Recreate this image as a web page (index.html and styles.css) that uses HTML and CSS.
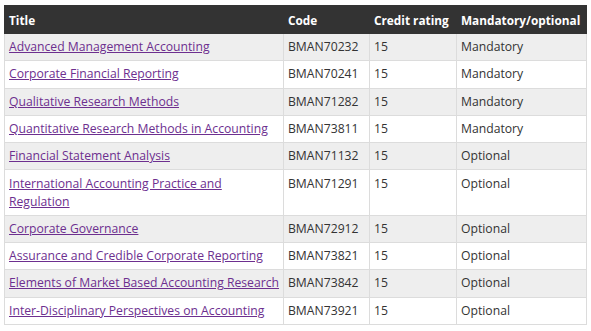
FILE: index.html
```html
<!DOCTYPE html>
<html>
<head>
<meta charset="utf-8">
<link rel="stylesheet" href="styles.css">
</head>
<body>
<div class="wrap">
<table class="units">
<colgroup>
<col class="c-title"><col class="c-code"><col class="c-credit"><col class="c-mand">
</colgroup>
<thead>
<tr><th>Title</th><th>Code</th><th>Credit rating</th><th>Mandatory/optional</th></tr>
</thead>
<tbody>
<tr><td><a href="#">Advanced Management Accounting</a></td><td>BMAN70232</td><td>15</td><td>Mandatory</td></tr>
<tr><td><a href="#">Corporate Financial Reporting</a></td><td>BMAN70241</td><td>15</td><td>Mandatory</td></tr>
<tr><td><a href="#">Qualitative Research Methods</a></td><td>BMAN71282</td><td>15</td><td>Mandatory</td></tr>
<tr><td><a href="#">Quantitative Research Methods in Accounting</a></td><td>BMAN73811</td><td>15</td><td>Mandatory</td></tr>
<tr><td><a href="#">Financial Statement Analysis</a></td><td>BMAN71132</td><td>15</td><td>Optional</td></tr>
<tr><td><a href="#">International Accounting Practice and<br>Regulation</a></td><td>BMAN71291</td><td>15</td><td>Optional</td></tr>
<tr><td><a href="#">Corporate Governance</a></td><td>BMAN72912</td><td>15</td><td>Optional</td></tr>
<tr><td><a href="#">Assurance and Credible Corporate Reporting</a></td><td>BMAN73821</td><td>15</td><td>Optional</td></tr>
<tr><td><a href="#">Elements of Market Based Accounting Research</a></td><td>BMAN73842</td><td>15</td><td>Optional</td></tr>
<tr><td><a href="#">Inter-Disciplinary Perspectives on Accounting</a></td><td>BMAN73921</td><td>15</td><td>Optional</td></tr>
</tbody>
</table>
</div>
</body>
</html>
```
FILE: styles.css
```css
html, body {
  margin: 0;
  padding: 0;
  background: #fff;
}
.wrap {
  padding: 5px 4px;
}
.units {
  border-collapse: collapse;
  table-layout: fixed;
  width: 582px;
  font-family: "Open Sans", "Liberation Sans", sans-serif;
  font-size: 12.2px;
  color: #333;
}
.c-title { width: 279px; }
.c-code { width: 86px; }
.c-credit { width: 87px; }
.c-mand { width: 130px; }
.units th {
  background: #333;
  color: #fff;
  font-weight: bold;
  font-size: 11.8px;
  text-align: left;
  white-space: nowrap;
  line-height: 18px;
  padding: 4.5px 4px;
  height: 18px;
  border: 1px solid #333;
}
.units td {
  line-height: 18px;
  padding: 4.15px 4px;
  border: 1px solid #dcdcdc;
  vertical-align: top;
  white-space: nowrap;
}
.units tbody tr:nth-child(odd) td {
  background: #eeeeee;
}
.units a {
  color: #6d2f8f;
  text-decoration: underline;
}
```
